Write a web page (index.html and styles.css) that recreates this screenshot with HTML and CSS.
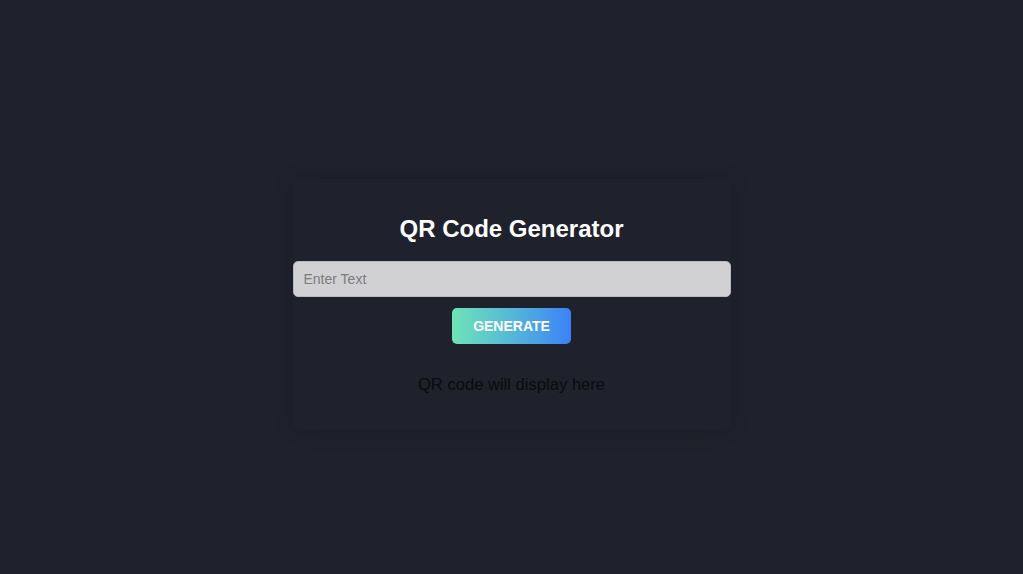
FILE: index.html
```html
<!DOCTYPE html>
<html lang="en">
<head>
<meta charset="utf-8">
<title>QR Code Generator</title>
<link rel="stylesheet" href="styles.css">
</head>
<body>
<main class="page">
  <section class="card">
    <h1 class="title">QR Code Generator</h1>
    <input class="text-input" type="text" placeholder="Enter Text">
    <button class="generate-btn" type="button">GENERATE</button>
    <p class="qr-output">QR code will display here</p>
  </section>
</main>
</body>
</html>
```

FILE: styles.css
```css
html, body {
  margin: 0;
  padding: 0;
  background: #1f212c;
  font-family: "Liberation Sans", Arial, sans-serif;
}

.page {
  min-height: 574px;
  box-sizing: border-box;
  padding-top: 179px;
  display: flex;
  justify-content: center;
  align-items: flex-start;
}

.card {
  width: 438px;
  box-sizing: border-box;
  padding: 36px 0 36px;
  background: #1f212c;
  border-radius: 8px;
  box-shadow: 0 0 22px rgba(0, 0, 0, 0.14);
  display: flex;
  flex-direction: column;
  align-items: center;
}

.title {
  margin: 0;
  font-size: 24px;
  line-height: 28px;
  font-weight: 700;
  color: #ffffff;
  text-align: center;
}

.text-input {
  margin-top: 18px;
  width: 100%;
  height: 36px;
  box-sizing: border-box;
  padding: 0 10px;
  border: 1px solid #b9b9bd;
  border-radius: 5px;
  background: #d1d1d4;
  font-family: "Liberation Sans", Arial, sans-serif;
  font-size: 14px;
  color: #222;
  outline: none;
}

.text-input::placeholder {
  color: #7b7b7e;
}

.generate-btn {
  margin-top: 11px;
  width: 119px;
  height: 36px;
  padding: 0;
  border: none;
  border-radius: 5px;
  background: linear-gradient(90deg, #6ee3b6 0%, #55b8d9 50%, #3b82f6 100%);
  color: #ffffff;
  font-family: "Liberation Sans", Arial, sans-serif;
  font-size: 14px;
  font-weight: 700;
  cursor: pointer;
}

.qr-output {
  margin: 32px 0 0;
  font-size: 16.6px;
  line-height: 18px;
  color: #0a0b0f;
  text-align: center;
}
```
